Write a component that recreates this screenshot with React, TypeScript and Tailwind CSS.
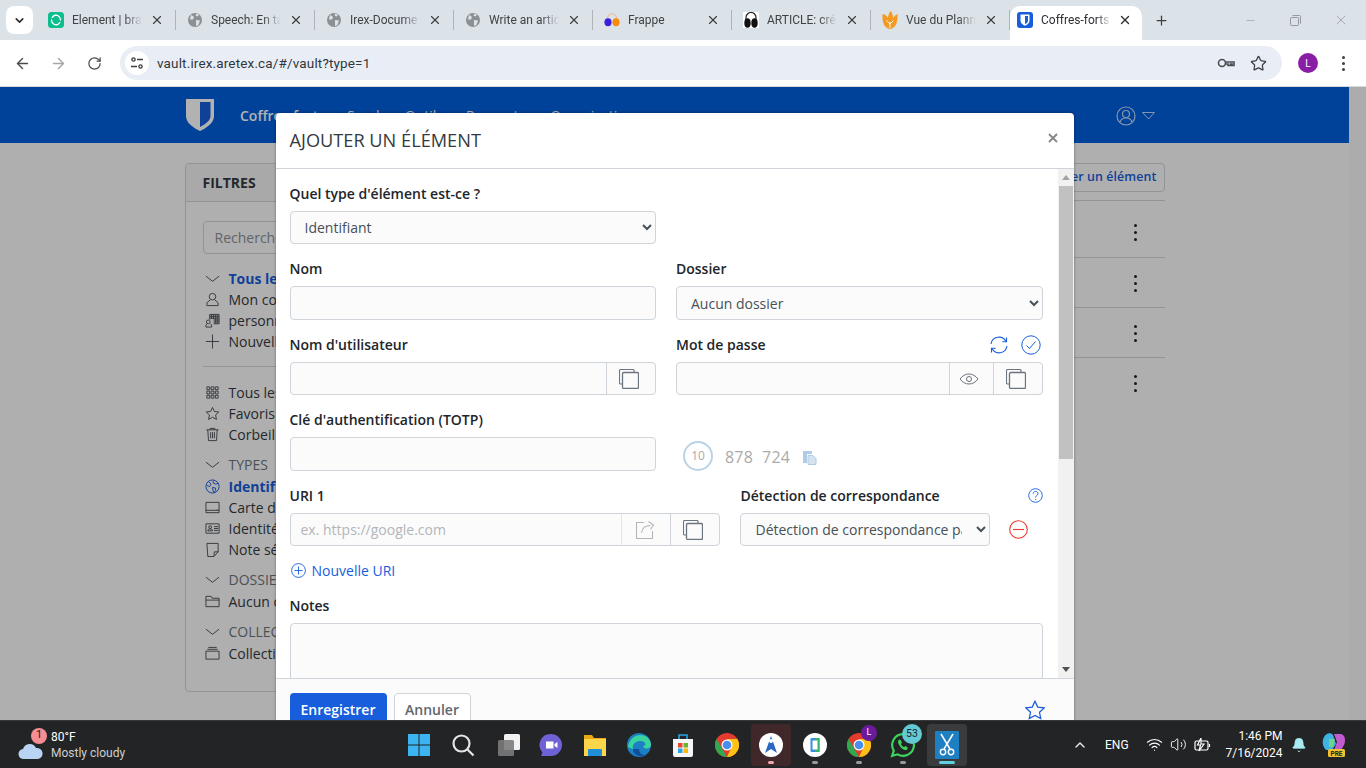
import { ArrowLeft, ArrowRight, ChevronDown, ChevronUp, Minus, Plus, RotateCw, Star, Volume2, Wifi, X, Bell } from "lucide-react";
import type { ReactNode } from "react";

const tabs = [
  { title: "Element | bra", icon: "element" },
  { title: "Speech: En ta", icon: "globe" },
  { title: "Irex-Docume", icon: "globe" },
  { title: "Write an artic", icon: "globe" },
  { title: "Frappe", icon: "frappe" },
  { title: "ARTICLE: créa", icon: "article" },
  { title: "Vue du Plann", icon: "tulip" },
];

function Favicon({ kind }: { kind: string }) {
  if (kind === "element")
    return (
      <svg width="16" height="16" viewBox="0 0 16 16">
        <rect width="16" height="16" rx="3.5" fill="#0dbd8b" />
        <path d="M6 3.5a4.8 4.8 0 0 1 6.5 4.5M10 12.5A4.8 4.8 0 0 1 3.5 8M4.2 5.5A4.8 4.8 0 0 1 8 3M11.8 10.5A4.8 4.8 0 0 1 8 13" stroke="#fff" strokeWidth="1.3" fill="none" strokeLinecap="round" />
      </svg>
    );
  if (kind === "globe")
    return (
      <svg width="16" height="16" viewBox="0 0 16 16">
        <circle cx="8" cy="8" r="7" fill="#8b9095" />
        <path d="M4 2.8 7 5 6 7.500 3 7.500ZM9 8l4 .5-1.500 4.500-2.500 1ZM9.500 1.500 12 3l-1.500 1.500-2-1Z" fill="#dce3e8" />
      </svg>
    );
  if (kind === "frappe")
    return (
      <svg width="18" height="16" viewBox="0 0 18 16">
        <path d="M4 8V6a5 5 0 0 1 10 0v2" stroke="#f0b27a" fill="none" />
        <ellipse cx="4.500" cy="10.500" rx="4" ry="4.500" fill="#3b1fe0" />
        <ellipse cx="13.500" cy="10.500" rx="4" ry="4.500" fill="#f58a0b" />
      </svg>
    );
  if (kind === "article")
    return (
      <svg width="16" height="16" viewBox="0 0 16 16">
        <rect width="16" height="16" fill="#fff" />
        <path d="M3 8V5.500a5 5 0 0 1 10 0V8" stroke="#222" fill="none" strokeWidth="1.200" />
        <ellipse cx="4.500" cy="11" rx="3.200" ry="4.800" fill="#111" />
        <ellipse cx="11.500" cy="11" rx="3.200" ry="4.800" fill="#111" />
      </svg>
    );
  if (kind === "tulip")
    return (
      <svg width="16" height="18" viewBox="0 0 16 18">
        <path d="M8 18C2 17 0 11 .5 3c3 .500 4.500 2 5.500 4C6.300 4 7 2 8.500 0 10.500 2 11 4.500 11 7c1-1.500 2.500-3 4.500-4 .500 8-1.500 14-7.500 15Z" fill="#f39a22" />
        <path d="M8 17v-6M8 13 4.500 9.500M8 13l3.500-3.500" stroke="#fff" strokeWidth=".9" fill="none" />
      </svg>
    );
  return <Shield size={16} />;
}

function Shield({ size }: { size: number }) {
  return (
    <svg width={size} height={size} viewBox="0 0 16 16">
      <rect width="16" height="16" rx="3" fill="#175ddc" />
      <path d="M3.500 2.500h9v6.300c0 2.400-2.400 4-4.500 5-2.100-1-4.500-2.600-4.500-5Z" fill="#fff" />
      <path d="M8 4h3v4.800c0 1.500-1.500 2.600-3 3.400Z" fill="#175ddc" />
    </svg>
  );
}

function Tab({ title, icon }: { title: string; icon: string }) {
  return (
    <div className="mb-[6px] flex h-[28px] w-[139px] shrink-0 items-center pl-[11px]">
      <span className="flex w-[16px] shrink-0 justify-center"><Favicon kind={icon} /></span>
      <span className="ml-2 w-[70px] overflow-hidden whitespace-nowrap text-[12px] text-[#3f4347] [mask-image:linear-gradient(to_right,black_75%,transparent)]">{title}</span>
      <X size={14} strokeWidth={2} className="ml-auto text-[#3c4043]" />
      <span className="ml-[11px] h-[20px] w-px shrink-0 bg-[#aeb4b9]" />
    </div>
  );
}

function ChromeBar() {
  return (
    <div className="font-['Roboto',sans-serif]">
      <div className="flex h-[40px] items-end bg-[#dbe2e8] pl-[6px]">
        <div className="mb-[6px] flex h-[28px] w-[27px] items-center justify-center rounded-lg bg-white">
          <ChevronDown size={13} strokeWidth={3} className="text-[#2b2e31]" />
        </div>
        <div className="flex pl-[4px]">
          {tabs.map((t) => (
            <Tab key={t.icon + t.title} title={t.title} icon={t.icon} />
          ))}
        </div>
        <div className="flex h-[34px] w-[132px] shrink-0 items-center rounded-t-[10px] bg-white pb-[6px] pl-[7px] pr-[10px]">
          <Shield size={16} />
          <span className="ml-2 w-[70px] overflow-hidden whitespace-nowrap text-[12px] text-[#2d3033] [mask-image:linear-gradient(to_right,black_80%,transparent)]">Coffres-forts</span>
          <X size={14} strokeWidth={2.4} className="ml-auto text-[#2b2e31]" />
        </div>
        <div className="mb-[6px] ml-[12px] flex h-[28px] items-center">
          <Plus size={15} strokeWidth={2} className="text-[#3c4043]" />
        </div>
        <div className="mb-[6px] ml-auto flex h-[28px] items-center pr-[17px] text-[#8b9095]">
          <Minus size={13} strokeWidth={1} />
          <svg className="ml-[33px]" width="11" height="11" viewBox="0 0 11 11" fill="none" stroke="currentColor" strokeWidth=".9">
            <rect x=".5" y="2.500" width="8" height="8" rx="1" />
            <path d="M2.500.5h7a1 1 0 0 1 1 1v7" />
          </svg>
          <X size={16} strokeWidth={1} className="ml-[32px]" />
        </div>
      </div>
      <div className="flex h-[47px] items-center border-b border-[#d5d8db] bg-white pl-[14px] pr-[13px]">
        <ArrowLeft size={17} strokeWidth={2} className="text-[#4a4d50]" />
        <ArrowRight size={17} strokeWidth={2} className="ml-[19px] text-[#a4a7aa]" />
        <RotateCw size={15} strokeWidth={2} className="ml-[20px] text-[#4a4d50]" />
        <div className="ml-[18px] flex h-[34px] w-[1162px] items-center rounded-full bg-[#e9eef6] pl-[5px] pr-[15px]">
          <span className="flex h-[24px] w-[24px] items-center justify-center rounded-full bg-white">
            <svg width="14" height="14" viewBox="0 0 14 14" fill="none" stroke="#3c4043" strokeWidth="1.400">
              <circle cx="3.500" cy="3.500" r="1.600" />
              <path d="M7 3.500h6M1 10.500h6" />
              <circle cx="10.500" cy="10.500" r="1.600" />
            </svg>
          </span>
          <span className="ml-[8px] text-[13.500px] tracking-[0.15px] text-[#33373a]">vault.irex.aretex.ca/#/vault?type=1</span>
          <svg className="ml-auto" width="18" height="12" viewBox="0 0 18 12" fill="none" stroke="#4a4d50" strokeWidth="1.600">
            <circle cx="5" cy="6" r="3.500" />
            <path d="M8.500 5h8.500v3.500h-2V7h-1.500v1.500H11V7H8.500" />
          </svg>
          <Star size={17} strokeWidth={1.800} className="ml-[15px] text-[#3c4043]" />
        </div>
        <span className="ml-[16px] flex h-[20px] w-[20px] items-center justify-center rounded-full bg-[#8a1da6] text-[10px] text-white">L</span>
        <span className="ml-[24px] flex flex-col gap-[3px]">
          <i className="h-[3px] w-[3px] rounded-full bg-[#3c4043]" />
          <i className="h-[3px] w-[3px] rounded-full bg-[#3c4043]" />
          <i className="h-[3px] w-[3px] rounded-full bg-[#3c4043]" />
        </span>
      </div>
    </div>
  );
}

function Svg({ children, size = 15 }: { children: ReactNode; size?: number }) {
  return (
    <svg width={size} height={size} viewBox="0 0 16 16" fill="none" stroke="currentColor" strokeWidth="1" className="shrink-0">
      {children}
    </svg>
  );
}

const sideIcons: Record<string, ReactNode> = {
  chevron: <path d="M1 5.500 8 11l7-5.500" />,
  user: <path d="M8 1.500a3.500 3.500 0 1 1 0 7 3.500 3.500 0 0 1 0-7ZM5.500 8.500 2 11.500v3h12v-3l-3.500-3" />,
  org: <path d="M5 7V1.500h10v10H9M7 1.500v5M9 1.500v5M11 1.500v10M13 1.500v10M5 3.500h10M5 5.500h10M9 7.500h6M9 9.500h6M3.500 7.500a2 2 0 1 1 0 4 2 2 0 0 1 0-4ZM1 15v-2l1-1.500M7 15v-2l-1-1.500M1 15h6" />,
  plus: <path d="M8 .5v15M1 8h14" />,
  grid: <path d="M2 2h3v3H2ZM6.500 2h3v3h-3ZM11 2h3v3h-3ZM2 6.500h3v3H2ZM6.500 6.500h3v3h-3ZM11 6.500h3v3h-3ZM2 11h3v3H2ZM6.500 11h3v3h-3ZM11 11h3v3h-3Z" />,
  star: <path d="m8 1.500 2 4.300 4.700.6-3.400 3.200.9 4.700L8 12l-4.200 2.300.9-4.700L1.300 6.400 6 5.800Z" />,
  trash: <path d="M1.500 3h13M3 3l.7 11.500h8.600L13 3M5.500 3V1.500h5V3M6 5.500v6.500M8 5.500v6.500M10 5.500v6.500" />,
  globe: <path d="M8 1a7 7 0 1 1 0 14A7 7 0 0 1 8 1ZM4 3l2.500 2.500L5 8 2 7M9 1.500 8.500 4l3 1.500 3-1M8 9l3 .5.500 2.500-2 2.500-1-2Z" />,
  card: <path d="M1 2.500h14v11H1ZM1 11h14M13 11v-1" />,
  id: <path d="M1 3h14v10H1ZM3 10.500c0-1.500 1-2 2.500-2s2.500.5 2.500 2ZM5.500 5a1.500 1.500 0 1 1 0 3 1.500 1.500 0 0 1 0-3ZM9.500 6H14M9.500 8H14M9.500 10H14" />,
  note: <path d="M2 1.500h12v9l-4.500 5H3Zm12 9H10l-.5 5" />,
  folder: <path d="M1 2.500h5.500l1 2H15v9H1ZM1 6.500h14" />,
  coll: <path d="M1 5.500h14v8.500H1ZM2.500 3.500h11M3.500 1.500h9" />,
};

function SideRow({ icon, label, active, muted, className = "" }: { icon: string; label: string; active?: boolean; muted?: boolean; className?: string }) {
  const iconColor = active && icon !== "chevron" ? "text-[#175ddc]" : "text-[#4a4f55]";
  return (
    <div className={`flex h-[21px] items-center gap-[9px] text-[14px] ${active ? "font-bold text-[#175ddc]" : muted ? "text-[#6c757d]" : "text-[#343a40]"} ${className}`}>
      <span className={iconColor}>
        <Svg>{sideIcons[icon]}</Svg>
      </span>
      <span className="whitespace-nowrap">{label}</span>
    </div>
  );
}

function Sidebar() {
  return (
    <aside className="h-[529px] w-[245px] shrink-0 rounded border border-[#ced4da] bg-[#fbfbfb]">
      <div className="flex h-[38px] items-center rounded-t border-b border-[#ced4da] bg-[#f3f3f3] pl-[17px] text-[14px] font-bold text-[#343a40]">FILTRES</div>
      <div className="px-[17px] pt-[19px]">
        <input placeholder="Rechercher" className="h-[33px] w-full rounded border border-[#ced4da] px-[11px] text-[14px] placeholder:text-[#8a9096]" />
        <div className="mt-[14px] pl-[2px]">
          <SideRow icon="chevron" label="Tous les coffres" active />
          <SideRow icon="user" label="Mon coffre" />
          <SideRow icon="org" label="personnel" />
          <SideRow icon="plus" label="Nouvelle organisation" />
        </div>
        <div className="mb-[15px] mt-[14px] h-px bg-[#ced4da]" />
        <div className="pl-[2px]">
          <SideRow icon="grid" label="Tous les éléments" />
          <SideRow icon="star" label="Favoris" />
          <SideRow icon="trash" label="Corbeille" />
          <SideRow icon="chevron" label="TYPES" muted className="mt-[9px]" />
          <SideRow icon="globe" label="Identifiant" active className="mt-px" />
          <SideRow icon="card" label="Carte de paiement" />
          <SideRow icon="id" label="Identité" />
          <SideRow icon="note" label="Note sécurisée" />
          <SideRow icon="chevron" label="DOSSIERS" muted className="mt-[9px]" />
          <SideRow icon="folder" label="Aucun dossier" className="mt-px" />
          <SideRow icon="chevron" label="COLLECTIONS" muted className="mt-[9px]" />
          <SideRow icon="coll" label="Collections" className="mt-px" />
        </div>
      </div>
    </aside>
  );
}

function VaultRow({ h }: { h: string }) {
  return (
    <div className={`flex items-center justify-end border-b border-[#ced4da] pr-[28px] ${h}`}>
      <span className="flex flex-col gap-[4px]">
        <i className="h-[3px] w-[3px] rounded-full bg-[#212529]" />
        <i className="h-[3px] w-[3px] rounded-full bg-[#212529]" />
        <i className="h-[3px] w-[3px] rounded-full bg-[#212529]" />
      </span>
    </div>
  );
}

function VaultPage() {
  return (
    <div className="h-full w-[1349px] bg-[#fbfbfb] font-['Open_Sans',sans-serif]">
      <nav className="flex h-[56px] items-center bg-[#005edb] pl-[185px] text-white">
        <svg width="30" height="34" viewBox="0 0 30 34">
          <path d="M1 1h28v17c0 7-7 11.500-14 15C8 29.500 1 25 1 18Z" fill="#fff" />
          <path d="M15 4h10.500v14c0 4.500-5 8-10.500 11Z" fill="#175ddc" />
        </svg>
        <span className="ml-[25px] text-[14px] font-semibold">Coffres-forts</span>
        <span className="ml-[22px] text-[14px]">Send</span>
        <span className="ml-[25px] text-[14px]">Outils</span>
        <span className="ml-[23px] text-[14px]">Rapports</span>
        <span className="ml-[25px] text-[14px]">Organisations</span>
        <span className="ml-[475px] mt-[2px] flex items-center gap-[6px] opacity-75">
          <svg width="20" height="20" viewBox="0 0 20 20" fill="none" stroke="#fff" strokeWidth="1.200">
            <circle cx="10" cy="10" r="9" />
            <circle cx="10" cy="8" r="3.500" />
            <path d="M4 16c1-3 3-4 6-4s5 1 6 4" />
          </svg>
          <svg width="13" height="8" viewBox="0 0 13 8" fill="none" stroke="#fff">
            <path d="M.5.500h12L6.500 7Z" />
          </svg>
        </span>
      </nav>
      <div className="mx-auto flex w-[980px] gap-[20px] pt-[20px]">
        <Sidebar />
        <section className="min-w-0 flex-1">
          <div className="flex h-[38px] items-start justify-end border-b border-[#ced4da]">
            <button className="h-[29px] rounded border border-[#ced4da] px-[7px] text-[12.400px] font-semibold tracking-[0.1px] text-[#175ddc]">Ajouter un élément</button>
          </div>
          <VaultRow h="h-[57px] pt-[6px]" />
          <VaultRow h="h-[50px] pt-[2px]" />
          <VaultRow h="h-[50px] pt-[2px]" />
          <VaultRow h="h-[50px] border-b-0" />
        </section>
      </div>
    </div>
  );
}

function Label({ children }: { children: ReactNode }) {
  return <div className="mb-[7px] h-[21px] whitespace-nowrap text-[14px] font-semibold leading-[21px] text-[#212529]">{children}</div>;
}

function CopyIcon({ color = "#6c757d" }: { color?: string }) {
  return (
    <svg width="20" height="20" viewBox="0 0 20 20" fill="none" stroke={color} strokeWidth="1.100">
      <path d="M3.500 15H1.500a1 1 0 0 1-1-1V1.500a1 1 0 0 1 1-1H14a1 1 0 0 1 1 1V3.500" />
      <rect x="3.500" y="3.500" width="16" height="16" rx="1.200" strokeWidth="1.300" />
    </svg>
  );
}

const fieldCls = "rounded border border-[#ced4da] bg-[#fbfbfb] text-[14px] text-[#465057]";

function Select({ value, h }: { value: string; h: string }) {
  return (
    <select defaultValue={value} className={`${fieldCls} w-full ${h} px-[10px]`}>
      <option>{value}</option>
    </select>
  );
}

function GroupBtn({ w, children, muted, shift = "pr-[4px]" }: { w: string; children: ReactNode; muted?: boolean; shift?: string }) {
  return <div className={`flex shrink-0 items-center justify-center border-l border-[#ced4da] ${w} ${shift} ${muted ? "opacity-50" : ""}`}>{children}</div>;
}

function InputGroup({ placeholder, children }: { placeholder?: string; children: ReactNode }) {
  return (
    <div className="flex h-[33px] w-full overflow-hidden rounded border border-[#ced4da] bg-[#fbfbfb]">
      <input placeholder={placeholder} className="min-w-0 flex-1 bg-transparent px-[10px] text-[14px] outline-none placeholder:text-[#b2b6ba]" />
      {children}
    </div>
  );
}

function Scrollbar() {
  return (
    <div className="flex w-[16px] shrink-0 flex-col items-center justify-between bg-[#f1f1f1]">
      <div className="flex w-full flex-col items-center">
        <div className="flex h-[17px] items-center">
          <svg width="8" height="5" viewBox="0 0 8 5"><path d="M4 0l4 5H0Z" fill="#a3a3a3" /></svg>
        </div>
        <div className="h-[273px] w-[14px] bg-[#c1c1c1]" />
      </div>
      <div className="flex h-[17px] items-center">
        <svg width="8" height="5" viewBox="0 0 8 5"><path d="M4 5l4-5H0Z" fill="#505050" /></svg>
      </div>
    </div>
  );
}

function Modal() {
  return (
    <div className="h-[640px] w-[798px] shrink-0 rounded-[4px] bg-white font-['Open_Sans',sans-serif] shadow-[0_0_3px_rgba(0,0,0,0.4)]">
      <div className="flex h-[56px] items-center justify-between border-b border-[#ced4da] pl-[14px] pr-[14px]">
        <h1 className="text-[18.200px] text-[#343a40]">AJOUTER UN ÉLÉMENT</h1>
        <X size={14} strokeWidth={3.200} className="mb-[6px] text-[#85898d]" />
      </div>
      <div className="flex h-[510px] overflow-hidden border-b border-[#ced4da]">
        <div className="min-w-0 flex-1 pl-[14px] pr-[15px] pt-[14px]">
          <div className="grid grid-cols-2 gap-x-5">
            <div className="mb-[14px]">
              <Label>Quel type d'élément est-ce ?</Label>
              <Select value="Identifiant" h="h-[33px]" />
            </div>
            <div />
            <div className="mb-[14px]">
              <Label>Nom</Label>
              <input className={`${fieldCls} h-[34px] w-full px-[10px]`} />
            </div>
            <div className="mb-[14px]">
              <Label>Dossier</Label>
              <Select value="Aucun dossier" h="h-[34px]" />
            </div>
            <div className="mb-[14px]">
              <Label>Nom d'utilisateur</Label>
              <InputGroup>
                <GroupBtn w="w-[49px]"><CopyIcon /></GroupBtn>
              </InputGroup>
            </div>
            <div className="mb-[14px]">
              <div className="flex h-[28px] items-start justify-between pr-[2px]">
                <Label>Mot de passe</Label>
                <div className="mt-px flex items-center gap-[12px] text-[#175ddc]">
                  <svg width="20" height="20" viewBox="0 0 20 20" fill="none" stroke="currentColor" strokeWidth="1.100">
                    <path d="M2 9a8 8 0 0 1 15-2.500M18 11a8 8 0 0 1-15 2.500" />
                    <path d="M17.500 2.500v4.200h-4.200M2.500 17.500v-4.200h4.200" />
                  </svg>
                  <svg width="20" height="20" viewBox="0 0 20 20" fill="none" stroke="currentColor" strokeWidth="1">
                    <circle cx="10" cy="10" r="9.200" />
                    <path d="m5.500 10.500 3 3 6-7" />
                  </svg>
                </div>
              </div>
              <InputGroup>
                <GroupBtn w="w-[44px]">
                  <svg width="20" height="12" viewBox="0 0 20 12" fill="none" stroke="#6c757d" strokeWidth="1">
                    <path d="M1 6c2.500-3.300 5.500-5 9-5s6.500 1.700 9 5c-2.500 3.300-5.500 5-9 5S3.500 9.300 1 6Z" />
                    <circle cx="10" cy="6" r="2.500" />
                  </svg>
                </GroupBtn>
                <GroupBtn w="w-[49px]"><CopyIcon /></GroupBtn>
              </InputGroup>
            </div>
            <div className="mb-[14px]">
              <Label>Clé d'authentification (TOTP)</Label>
              <input className={`${fieldCls} h-[34px] w-full px-[10px]`} />
            </div>
            <div className="mb-[14px] flex items-end pl-[7px]">
              <div className="flex h-[30px] w-[30px] items-center justify-center rounded-full border-[2px] border-[#b9d3e8] text-[12px] text-[#b3a6ae]">10</div>
              <span className="ml-[12px] pb-[4px] text-[16px] leading-[20px] tracking-[0.2px] text-[#aaaaaa]">878</span>
              <span className="ml-[9px] pb-[4px] text-[16px] leading-[20px] tracking-[0.2px] text-[#aaaaaa]">724</span>
              <svg className="mb-[6px] ml-[13px]" width="14" height="14" viewBox="0 0 14 14">
                <path d="M0 0h9v3h-5v9H0Z" fill="#b0cbe6" />
                <path d="M5 4.500h5l3 3v6H5Z" fill="#d5e3f1" stroke="#b0cbe6" />
              </svg>
            </div>
          </div>
          <div className="mb-[14px] flex gap-5">
            <div className="w-[430px] shrink-0">
              <Label>URI 1</Label>
              <InputGroup placeholder="ex. https://google.com">
                <GroupBtn w="w-[49px]" muted shift="pr-[2px]">
                  <svg width="22" height="20" viewBox="0 0 20 20" fill="none" stroke="#6c757d" strokeWidth="1.100">
                    <path d="M9 2.500H1.500v16h16V11" />
                    <path d="M6.500 13c.5-5 4-7.500 9-7.500M13.500 1.500l5 3.500-3 4.500" />
                  </svg>
                </GroupBtn>
                <GroupBtn w="w-[49px]"><CopyIcon /></GroupBtn>
              </InputGroup>
            </div>
            <div className="min-w-0 flex-1">
              <div className="flex items-start justify-between pl-px">
                <Label>Détection de correspondance</Label>
                <svg className="mt-[3px]" width="15" height="15" viewBox="0 0 15 15" fill="none" stroke="#175ddc" strokeWidth=".9">
                  <circle cx="7.500" cy="7.500" r="6.800" />
                  <path d="M5.200 5.700c0-3 4.800-3 4.800 0 0 1.800-2.400 1.700-2.400 3.800M7.600 11v1" />
                </svg>
              </div>
              <div className="flex items-center">
                <select defaultValue="d" className={`${fieldCls} h-[33px] w-[250px] shrink-0 px-[11px]`}>
                  <option value="d">Détection de correspondance par défaut</option>
                </select>
                <svg className="ml-[19px]" width="19" height="19" viewBox="0 0 19 19" fill="none" stroke="#f03b2e" strokeWidth="1.100">
                  <circle cx="9.500" cy="9.500" r="8.800" />
                  <path d="M4 9.500h11" />
                </svg>
              </div>
            </div>
          </div>
          <div className="mb-[14px] flex h-[21px] items-center gap-[6px] text-[14px] text-[#175ddc]">
            <svg className="ml-[1px]" width="15" height="15" viewBox="0 0 15 15" fill="none" stroke="currentColor" strokeWidth=".9">
              <circle cx="7.500" cy="7.500" r="6.900" />
              <path d="M3.500 7.500h8M7.500 3.500v8" />
            </svg>
            <span>Nouvelle URI</span>
          </div>
          <Label>Notes</Label>
          <textarea className="h-[120px] w-full rounded border border-[#ced4da] bg-[#fbfbfb]" />
        </div>
        <Scrollbar />
      </div>
      <div className="flex h-[72px] items-start gap-[7px] rounded-b bg-[#fbfbfb] pl-[14px] pr-[29px] pt-[14px]">
        <button className="h-[33px] w-[97px] rounded bg-[#175ddc] text-[14px] font-semibold text-white">Enregistrer</button>
        <button className="h-[33px] w-[77px] rounded border border-[#ced4da] bg-white text-[14px] font-semibold text-[#5f666d]">Annuler</button>
        <svg className="ml-auto mt-[7px]" width="20" height="20" viewBox="0 0 16 16" fill="none" stroke="#175ddc" strokeWidth="1">
          <path d="m8 1 2.200 4.700 5.100.6-3.700 3.500 1 5.100L8 12.400l-4.600 2.500 1-5.100L.7 6.300l5.100-.6Z" />
        </svg>
      </div>
    </div>
  );
}

function TaskIcon({ children, dot, active }: { children: ReactNode; dot?: string; active?: string }) {
  return (
    <div className="flex h-[42px] w-[44px] shrink-0 items-center justify-center">
      <div className={`relative flex h-[42px] w-[40px] items-center justify-center rounded ${active ?? ""}`}>
        {children}
        {dot && <span className={`absolute bottom-[2px] h-[3px] rounded-full ${dot}`} />}
      </div>
    </div>
  );
}

function ChromeLogo({ size = 24 }: { size?: number }) {
  return (
    <svg width={size} height={size} viewBox="0 0 24 24">
      <circle cx="12" cy="12" r="12" fill="#e33b2e" />
      <path d="M12 24A12 12 0 0 1 1.600 6l6 10.500Z" fill="#2fa84f" />
      <path d="M12 24a12 12 0 0 0 10.400-18H12l4.500 8Z" fill="#fbc116" />
      <circle cx="12" cy="12" r="5.500" fill="#fff" />
      <circle cx="12" cy="12" r="4.300" fill="#4a8df0" />
    </svg>
  );
}

function Taskbar() {
  return (
    <footer className="flex h-[48px] shrink-0 items-center border-t border-[#383838] bg-[#232425] font-['Roboto',sans-serif] text-white">
      <div className="flex w-[397px] shrink-0 items-center pl-[18px]">
        <div className="relative h-[34px] w-[27px]">
          <svg className="absolute bottom-[2px] left-0" width="26" height="18" viewBox="0 0 26 18">
            <path d="M6 17a5 5 0 0 1-1-10 7 7 0 0 1 13-1 5.500 5.500 0 0 1 2 11Z" fill="#b9d4f2" />
          </svg>
          <span className="absolute left-[13px] top-0 flex h-[16px] w-[16px] items-center justify-center rounded-full bg-[#f58d94] text-[11px] text-[#222]">1</span>
        </div>
        <div className="ml-[6px] leading-[16px]">
          <div className="text-[12px] text-white">80°F</div>
          <div className="text-[12px] text-[#cfcfcf]">Mostly cloudy</div>
        </div>
      </div>
      <div className="flex items-center">
        <TaskIcon>
          <svg width="24" height="24" viewBox="0 0 24 24">
            <path d="M1 1h10.500v10.500H1ZM12.500 1H23v10.500H12.500ZM1 12.500h10.500V23H1ZM12.500 12.500H23V23H12.500Z" fill="#3cb4f2" />
          </svg>
        </TaskIcon>
        <TaskIcon>
          <svg width="24" height="24" viewBox="0 0 24 24" fill="none" stroke="#e4e4e4" strokeWidth="2.200">
            <circle cx="10.500" cy="10.500" r="8" />
            <path d="m16.500 16.500 6 6" />
          </svg>
        </TaskIcon>
        <TaskIcon>
          <svg className="ml-[4px]" width="24" height="24" viewBox="0 0 24 24">
            <rect x="7" y="1" width="16" height="16" rx="1.500" fill="#f2f2f2" />
            <rect x="1" y="7" width="16" height="16" rx="1.500" fill="#7b7b7b" fillOpacity=".9" />
          </svg>
        </TaskIcon>
        <TaskIcon>
          <svg width="24" height="24" viewBox="0 0 24 24">
            <path d="M12 1a11 11 0 0 1 0 22H2l1.500-3.500A11 11 0 0 1 12 1Z" fill="#6f62d6" />
            <path d="M7 8.500h7.500v7H7ZM15.500 11l3-2v6l-3-2Z" fill="#fff" />
          </svg>
        </TaskIcon>
        <TaskIcon>
          <svg width="24" height="24" viewBox="0 0 24 24">
            <path d="M1 2h8l2 3h12v18H1Z" fill="#e8a915" />
            <path d="M1 6h22v17H1Z" fill="#fbd54a" />
            <rect x="5" y="16" width="14" height="7" rx="1" fill="#1f8fd8" />
          </svg>
        </TaskIcon>
        <TaskIcon>
          <svg width="24" height="24" viewBox="0 0 24 24">
            <circle cx="12" cy="12" r="12" fill="#1c7fc4" />
            <path d="M1 14C2 6 8 2 13 2c6 0 11 4 11 10 0 4-7 5-8 1 4 0 3-5-3-5-5 0-8 4-7 8-2-1-4-1-5-2Z" fill="#38d39f" />
            <path d="M6 16c0 5 6 9 12 6-4 0-6-3-6-6Z" fill="#0f4f99" />
          </svg>
        </TaskIcon>
        <TaskIcon>
          <svg width="24" height="26" viewBox="0 0 24 26">
            <path d="M2 7h20v16a2 2 0 0 1-2 2H4a2 2 0 0 1-2-2Z" fill="#f5f5f5" />
            <path d="M8 7V3h8v4" stroke="#29a3e3" strokeWidth="1.600" fill="none" />
            <path d="M7 11h4.500v4.500H7Z" fill="#e8492e" />
            <path d="M12.500 11H17v4.500h-4.500Z" fill="#6ab42d" />
            <path d="M7 16.500h4.500V21H7Z" fill="#2aa4e8" />
            <path d="M12.500 16.500H17V21h-4.500Z" fill="#f9b90b" />
          </svg>
        </TaskIcon>
        <TaskIcon><ChromeLogo /></TaskIcon>
        <TaskIcon active="bg-[#40282a]" dot="w-[6px] bg-[#f0a8ae]">
          <svg width="24" height="24" viewBox="0 0 24 24">
            <circle cx="12" cy="12" r="12" fill="#fff" />
            <path d="M12 3 6 20l6-4 6 4Z" fill="#2b68c4" />
            <circle cx="12" cy="8" r="2" fill="#fff" />
          </svg>
        </TaskIcon>
        <TaskIcon dot="w-[6px] bg-[#9a9a9a]">
          <svg width="24" height="24" viewBox="0 0 24 24">
            <circle cx="12" cy="12" r="12" fill="#fff" />
            <rect x="7.500" y="5" width="9" height="14" rx="1" fill="#3a8fdc" />
            <path d="M12 5h4.500v14H12Z" fill="#38b36a" />
            <rect x="9.500" y="7.500" width="5" height="9" fill="#fff" />
          </svg>
        </TaskIcon>
        <TaskIcon dot="w-[6px] bg-[#9a9a9a]">
          <ChromeLogo />
          <span className="absolute left-[22px] top-[1px] flex h-[16px] w-[16px] items-center justify-center rounded-full bg-[#6a1b9a] text-[9px] text-white">L</span>
        </TaskIcon>
        <TaskIcon dot="w-[6px] bg-[#9a9a9a]">
          <svg width="26" height="26" viewBox="0 0 24 24" fill="none">
            <path d="M12 2a10 10 0 0 0-8.500 15.200L2 22l5-1.400A10 10 0 1 0 12 2Z" stroke="#3cd65f" strokeWidth="2" />
            <path d="M8.500 7c-1.500 1-1.500 3 .5 6s4.500 4 6 3.500 1.500-2 1-2.500l-2-1-1 1c-1-.3-2.500-2-3-3l1-1-1-2.500Z" fill="#3cd65f" />
          </svg>
          <span className="absolute left-[19px] top-0 flex h-[20px] w-[20px] items-center justify-center rounded-full bg-[#63c9d3] text-[10.500px] text-[#16262a]">53</span>
        </TaskIcon>
        <TaskIcon active="bg-[#3a3b3d]" dot="w-[16px] bg-[#5fd0de]">
          <svg width="24" height="28" viewBox="0 0 24 28">
            <rect width="24" height="28" rx="1" fill="#1e7fc2" />
            <path d="m6 3 9 15M18 3 9 18" stroke="#fff" strokeWidth="1.500" />
            <circle cx="8" cy="21" r="2.700" stroke="#fff" strokeWidth="1.400" fill="none" />
            <circle cx="16" cy="21" r="2.700" stroke="#fff" strokeWidth="1.400" fill="none" />
          </svg>
        </TaskIcon>
      </div>
      <div className="ml-[103px] flex items-center">
        <ChevronUp size={16} strokeWidth={2} className="text-[#eee]" />
        <span className="ml-[17px] text-[12px]">ENG</span>
        <Wifi size={17} strokeWidth={1.600} className="ml-[17px]" />
        <Volume2 size={17} strokeWidth={1.300} className="ml-[7px]" />
        <svg className="ml-[7px]" width="17" height="14" viewBox="0 0 17 14" fill="none" stroke="#fff" strokeWidth="1.200">
          <rect x="1" y="3" width="13" height="9" rx="1.500" />
          <path d="M15.500 6v3" />
          <path d="M7 0 3.500 7h3L5 13l5-7H7Z" fill="#232425" />
        </svg>
        <div className="ml-[12px] w-[60px] text-right text-[12px] leading-[17px]">
          <div>1:46 PM</div>
          <div>7/16/2024</div>
        </div>
        <Bell size={16} fill="#a8ecf2" strokeWidth={1} className="ml-[8px] text-[#a8ecf2]" />
        <svg className="ml-[15px]" width="24" height="26" viewBox="0 0 24 26">
          <path d="M2 5c2-4 7-5 9-2l3 9-4 6H4C0 14 0 9 2 5Z" fill="#3fb4e0" />
          <path d="M12 2h7c4 1 5 6 3 11l-3 5h-7l3-8Z" fill="#c25bd0" />
          <path d="M7 7h6l-2 8H7Z" fill="#6fd38c" />
          <rect x="6" y="17" width="17" height="8" rx="1.500" fill="#f2c230" />
          <text x="14.500" y="23.500" textAnchor="middle" fontSize="6.500" fontWeight="700" fill="#222">PRE</text>
        </svg>
      </div>
    </footer>
  );
}

export default function App() {
  return (
    <div className="flex h-screen w-full flex-col overflow-hidden">
      <ChromeBar />
      <div className="relative min-h-0 flex-1 overflow-hidden bg-[#f7f7f7]">
        <VaultPage />
        <div className="absolute inset-0 flex justify-center bg-black/30 pr-[17px] pt-[26px]">
          <Modal />
        </div>
      </div>
      <Taskbar />
    </div>
  );
}
